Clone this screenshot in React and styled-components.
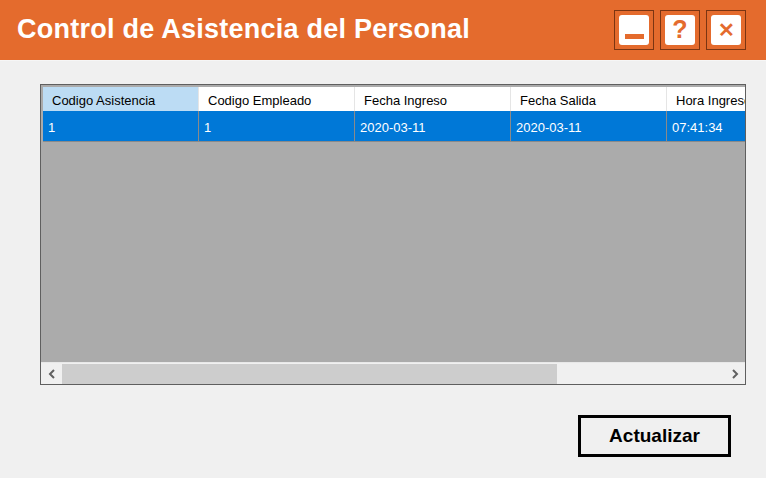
import React from 'react';
import styled, { createGlobalStyle } from 'styled-components';

const GlobalStyle = createGlobalStyle`
  html, body {
    margin: 0;
    padding: 0;
    background: #f0f0f0;
  }
  body {
    font-family: "Liberation Sans", Arial, sans-serif;
  }
`;

const Window = styled.div`
  width: 766px;
  height: 478px;
  display: flex;
  flex-direction: column;
  background: #f0f0f0;
  overflow: hidden;
`;

const TitleBar = styled.div`
  height: 61px;
  flex: none;
  background: #e46b2d;
  display: flex;
  align-items: center;
  justify-content: space-between;
  padding: 0 20px 0 17px;
  border-bottom: 1px solid #f6f6f6;
  box-sizing: border-box;
`;

const Title = styled.h1`
  margin: 0;
  color: #ffffff;
  font-size: 27px;
  font-weight: bold;
  letter-spacing: 0.25px;
  padding-bottom: 2px;
`;

const Controls = styled.div`
  display: flex;
  gap: 6px;
  padding-bottom: 1px;
`;

const CtlButton = styled.div`
  width: 40px;
  height: 40px;
  box-sizing: border-box;
  border: 1px solid #7b3512;
  padding: 4px;
  display: flex;
`;

const CtlFace = styled.div`
  flex: 1;
  background: #ffffff;
  border-radius: 3px;
  display: flex;
  align-items: ${p => (p.$bottom ? 'flex-end' : 'center')};
  justify-content: center;
  color: #e46b2d;
  font-weight: bold;
  font-size: ${p => p.$size || 22}px;
  line-height: 1;
`;

const MinBar = styled.div`
  width: 19px;
  height: 5px;
  background: #e46b2d;
  margin-bottom: 6px;
`;

const Body = styled.div`
  flex: 1;
  display: flex;
  flex-direction: column;
  padding: 23px 20px 0 40px;
`;

const Grid = styled.div`
  height: 301px;
  box-sizing: border-box;
  border: 1px solid #5f5f5f;
  padding: 2px 0 0 2px;
  background: #ababab;
  display: flex;
  flex-direction: column;
  font-size: 13px;
`;

const Rows = styled.div`
  flex: 1;
  overflow: hidden;
`;

const Row = styled.div`
  display: flex;
  height: ${p => p.$h}px;
  background: ${p => (p.$header ? '#ffffff' : '#0078d7')};
  color: ${p => (p.$header ? '#000000' : '#ffffff')};
  border-bottom: ${p => (p.$header ? 'none' : '1px solid #8a8a8a')};
  width: 800px;
`;

const Cell = styled.div`
  width: 156px;
  flex: none;
  box-sizing: border-box;
  display: flex;
  align-items: center;
  padding-left: ${p => (p.$header ? 9 : 5)}px;
  padding-top: 2px;
  border-right: 1px solid ${p => (p.$header ? '#e5e5e5' : '#8a8a8a')};
  background: ${p => (p.$active ? '#bcdcf4' : 'transparent')};
  white-space: nowrap;
  overflow: hidden;
`;

const ScrollBar = styled.div`
  height: 21px;
  flex: none;
  margin-left: -2px;
  border-top: 1px solid #e8e8e8;
  background: #f0f0f0;
  display: flex;
  align-items: stretch;
`;

const Arrow = styled.div`
  width: 21px;
  flex: none;
  display: flex;
  align-items: center;
  justify-content: center;
  color: #606060;
`;

const Track = styled.div`
  flex: 1;
  display: flex;
`;

const Thumb = styled.div`
  width: 495px;
  background: #cdcdcd;
  margin-top: 1px;
`;

const Footer = styled.div`
  display: flex;
  justify-content: flex-end;
  padding: 30px 15px 0 0;
`;

const ActionButton = styled.button`
  width: 153px;
  height: 42px;
  box-sizing: border-box;
  border: 3px solid #000000;
  background: #f0f0f0;
  font-family: "Liberation Sans", Arial, sans-serif;
  font-weight: bold;
  font-size: 19px;
  color: #000000;
  padding: 0;
`;

const columns = ['Codigo Asistencia', 'Codigo Empleado', 'Fecha Ingreso', 'Fecha Salida', 'Hora Ingreso'];
const record = ['1', '1', '2020-03-11', '2020-03-11', '07:41:34'];

function Chevron({ dir }) {
  const d = dir === 'left' ? 'M7 2 L3 6 L7 10' : 'M3 2 L7 6 L3 10';
  return (
    <svg width="10" height="12" viewBox="0 0 10 12">
      <path d={d} fill="none" stroke="currentColor" strokeWidth="2" />
    </svg>
  );
}

export default function App() {
  return (
    <Window>
      <GlobalStyle />
      <TitleBar>
        <Title>Control de Asistencia del Personal</Title>
        <Controls>
          <CtlButton>
            <CtlFace $bottom>
              <MinBar />
            </CtlFace>
          </CtlButton>
          <CtlButton>
            <CtlFace $size={25}>?</CtlFace>
          </CtlButton>
          <CtlButton>
            <CtlFace $size={20}>✕</CtlFace>
          </CtlButton>
        </Controls>
      </TitleBar>
      <Body>
        <Grid>
          <Rows>
            <Row $header $h={24}>
              {columns.map((c, i) => (
                <Cell key={c} $header $active={i === 0}>{c}</Cell>
              ))}
            </Row>
            <Row $h={30}>
              {record.map((v, i) => (
                <Cell key={i}>{v}</Cell>
              ))}
            </Row>
          </Rows>
          <ScrollBar>
            <Arrow><Chevron dir="left" /></Arrow>
            <Track>
              <Thumb />
            </Track>
            <Arrow><Chevron dir="right" /></Arrow>
          </ScrollBar>
        </Grid>
        <Footer>
          <ActionButton>Actualizar</ActionButton>
        </Footer>
      </Body>
    </Window>
  );
}
